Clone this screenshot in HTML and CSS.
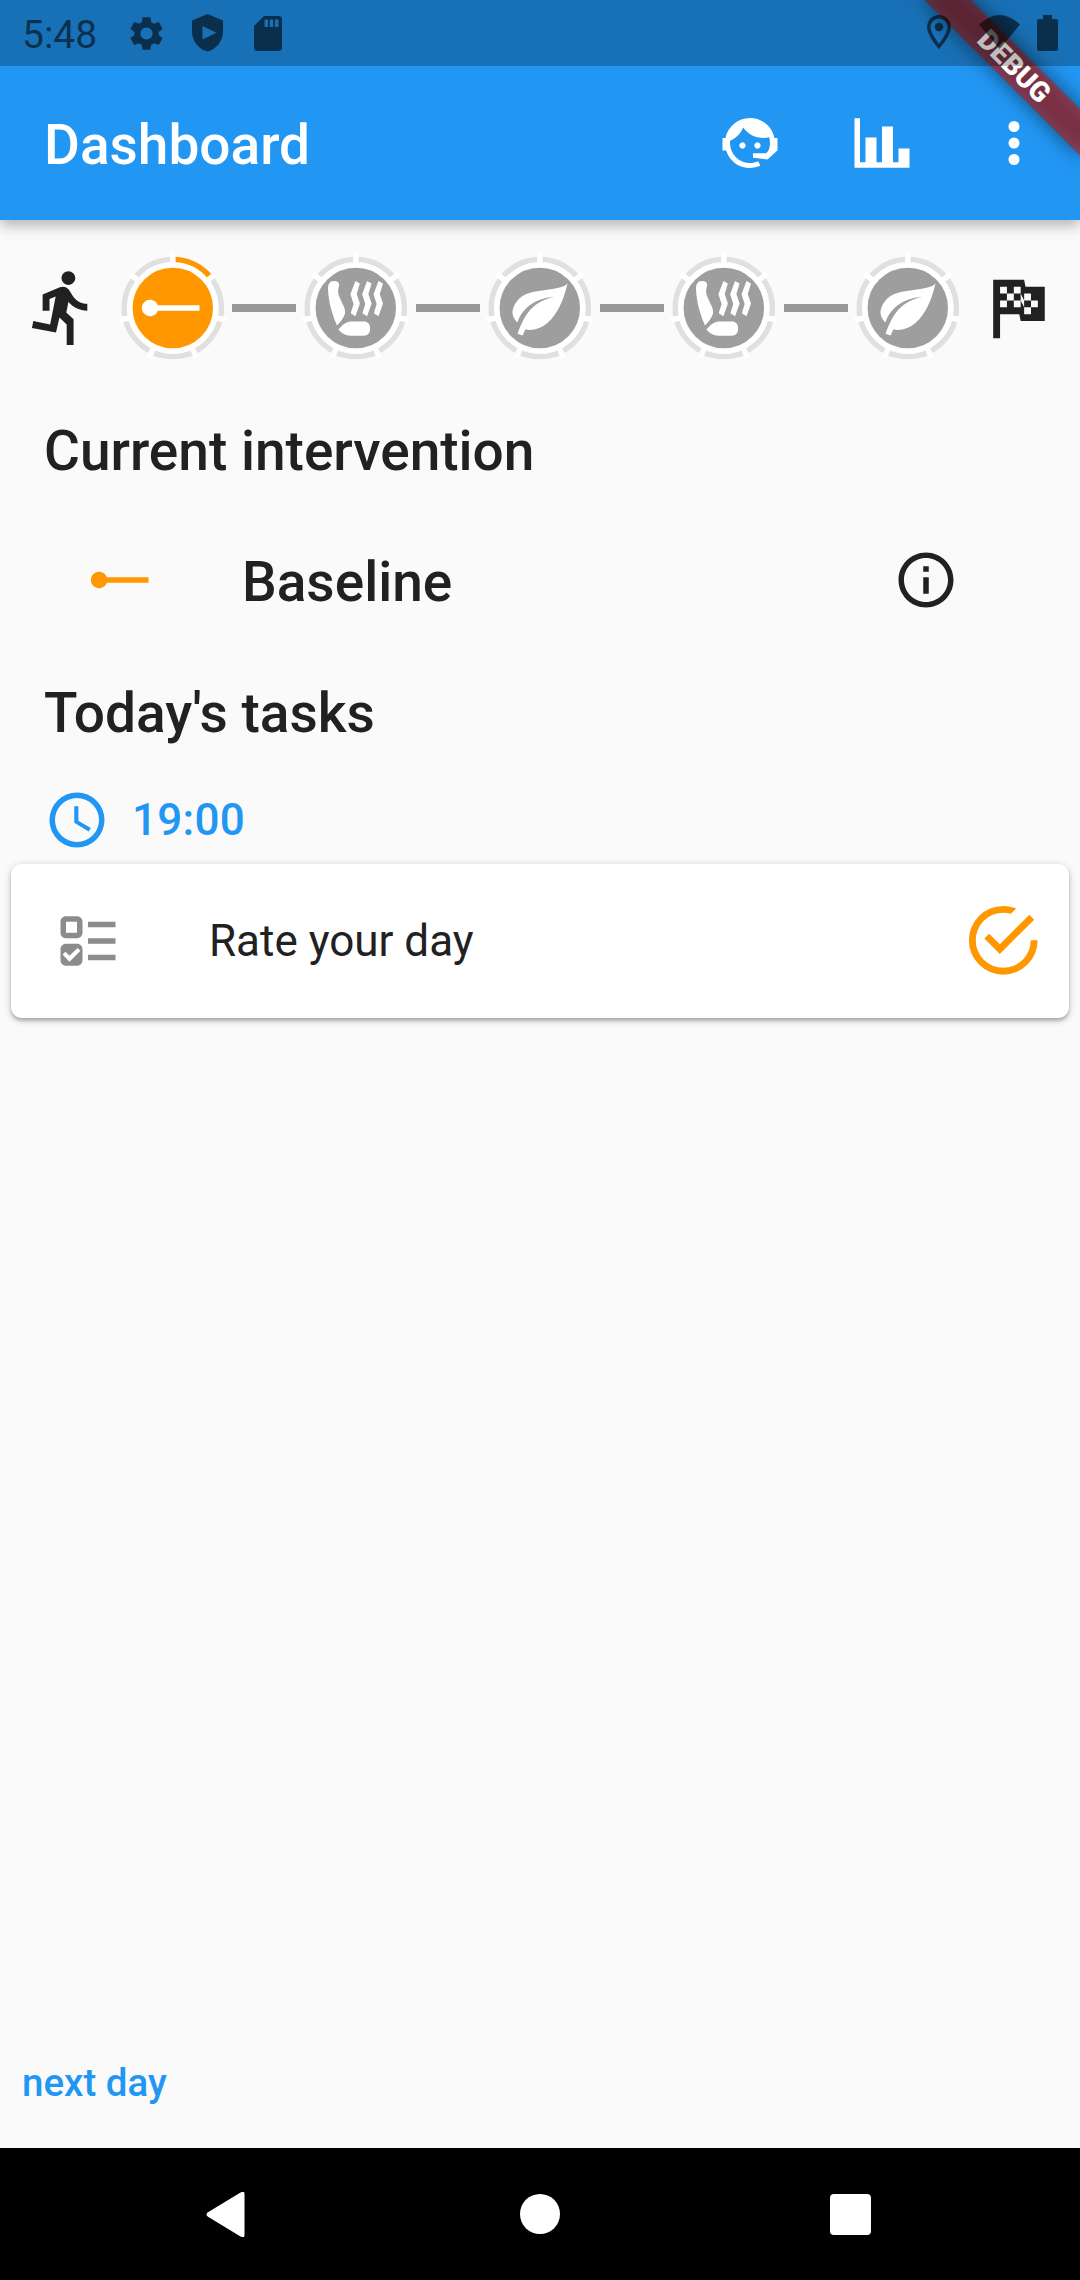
FILE: index.html
```html
<!DOCTYPE html>
<html lang="en">
<head>
<meta charset="utf-8">
<title>Dashboard</title>
<link rel="stylesheet" href="styles.css">
</head>
<body>
<svg class="defs" width="0" height="0">
  <defs>
    <symbol id="ray" viewBox="0 0 24 24"><path d="M4,9C5.31,9 6.42,9.83 6.83,11H22V13H6.83C6.42,14.17 5.31,15 4,15A3,3 0 0,1 1,12A3,3 0 0,1 4,9Z"/></symbol>
    <symbol id="leaf" viewBox="0 0 24 24"><path d="M17,8C8,10 5.9,16.17 3.82,21.34L5.71,22L6.66,19.7C7.14,19.87 7.64,20 8,20C19,20 22,3 22,3C21,5 14,5.25 9,6.25C4,7.25 2,11.5 2,13.5C2,15.5 3.75,17.25 3.75,17.25C7,8 17,8 17,8Z"/></symbol>
    <symbol id="heat" viewBox="0 0 66 66"><path d="M11 6C6.500 6 5 9 5 14C5.500 27 9 39 14 50.500C17.500 47 21 42.500 22 38.500C22.500 33 20 30 18 25.500C15.500 20 14.500 17 15.500 13C17 8.500 15.500 6 11 6ZM28 46.500H41C44.500 46.500 47 49 47 52.500V54.500C47 58 44.500 60.700 41 60.700H27.500C22.500 60.700 19 58.500 15.500 54.500C19 50 23 47 28 46.500ZM32.400 6L36.900 8.500L33.700 19L36.900 28.500L32.400 41.300L27.700 38.300L30.600 29L27.400 19.300ZM44.100 6L48.600 8.500L45.400 19L48.600 28.500L44.100 41.300L39.400 38.300L42.300 29L39.100 19.300ZM55.500 6L60 8.500L56.800 19L60 28.500L55.500 41.300L50.800 38.300L53.700 29L50.500 19.300Z"/></symbol>
    <symbol id="ring" viewBox="-60 -60 120 120">
      <circle r="48.700" fill="none" stroke="#e0e0e0" stroke-width="5.500"/>
      <path class="ring-progress" d="M0-48.700A48.700 48.700 0 0 1 38.080-30.360" fill="none" stroke-width="5.500"/>
      <g stroke="#fff" stroke-width="5.500">
        <path d="M0-45V-55"/><path d="M0-45V-55" transform="rotate(51.430)"/><path d="M0-45V-55" transform="rotate(102.860)"/><path d="M0-45V-55" transform="rotate(154.290)"/><path d="M0-45V-55" transform="rotate(205.710)"/><path d="M0-45V-55" transform="rotate(257.140)"/><path d="M0-45V-55" transform="rotate(308.570)"/>
      </g>
      <circle r="43.100" fill="currentColor" stroke="#fff" stroke-width="5.500"/>
    </symbol>
  </defs>
</svg>
<div class="screen">
  <header class="top">
    <div class="status-space"></div>
    <div class="app-bar">
      <h1 class="title">Dashboard</h1>
      <div class="action"><svg class="icon" viewBox="0 0 24 24"><path d="M18.720,14.760C19.070,13.910 19.260,13 19.260,12C19.260,11.280 19.150,10.590 18.960,9.950C18.310,10.100 17.630,10.180 16.920,10.180C13.860,10.180 11.150,8.670 9.500,6.340C8.610,8.500 6.910,10.260 4.770,11.220C4.730,11.470 4.730,11.740 4.730,12A7.270,7.270 0 0,0 12,19.270C13.050,19.270 14.060,19.040 14.970,18.630C15.540,19.720 15.800,20.260 15.780,20.260C14.140,20.810 12.870,21.080 12,21.080C9.580,21.080 7.270,20.130 5.570,18.420C4.530,17.380 3.760,16.110 3.330,14.730H2V10.180H3.090C3.930,6.040 7.600,2.920 12,2.920C14.400,2.920 16.710,3.870 18.420,5.580C19.690,6.840 20.540,8.450 20.890,10.180H22V14.730H21.940L18.380,18L13.080,17.400V15.730H17.910L18.720,14.760M9.270,11.770A1.140,1.140 0 1,1 9.260,11.770M14.720,11.770A1.140,1.140 0 1,1 14.710,11.770Z"/></svg></div>
      <div class="action"><svg class="icon" viewBox="0 0 24 24"><path d="M22,21H2V3H4V19H6V10H10V19H12V6H16V19H18V14H22V21Z"/></svg></div>
      <div class="action"><svg class="icon" viewBox="0 0 24 24"><circle cx="12" cy="6" r="2"/><circle cx="12" cy="12" r="2"/><circle cx="12" cy="18" r="2"/></svg></div>
    </div>
  </header>

  <div class="banner-clip">
    <div class="band band-shadow"></div>
    <div class="band banner">DEBUG</div>
  </div>

  <div class="status-bar">
    <span class="time">5:48</span>
    <svg class="st-gear" viewBox="2.300 2 19.400 20"><path d="M19.140 12.940c.04-.3.06-.61.06-.94 0-.32-.02-.64-.07-.94l2.030-1.580c.18-.14.23-.41.12-.61l-1.920-3.320c-.12-.22-.37-.29-.59-.22l-2.390.96c-.5-.38-1.030-.7-1.620-.94l-.36-2.540c-.04-.24-.24-.41-.48-.41h-3.840c-.24 0-.43.17-.47.41l-.36 2.540c-.59.24-1.130.57-1.620.94l-2.390-.96c-.22-.08-.47 0-.59.22L2.740 8.870c-.12.21-.08.47.12.61l2.030 1.580c-.05.3-.09.63-.09.94s.02.64.07.94l-2.030 1.580c-.18.14-.23.41-.12.61l1.920 3.320c.12.22.37.29.59.22l2.390-.96c.5.38 1.030.7 1.620.94l.36 2.540c.05.24.24.41.48.41h3.840c.24 0 .44-.17.47-.41l.36-2.540c.59-.24 1.130-.56 1.620-.94l2.390.96c.22.08.47 0 .59-.22l1.920-3.320c.12-.22.07-.47-.12-.61zM12 15.600a3.600 3.600 0 1 1 0-7.200 3.600 3.600 0 0 1 0 7.200z"/></svg>
    <svg class="st-shield" viewBox="0 0 31 38"><path fill-rule="evenodd" d="M15.500 0L31 6.500V18C31 27 24 35.500 15.500 37.500C7 35.500 0 27 0 18V6.500ZM10.500 12V25.500L24.500 18.700Z"/></svg>
    <svg class="st-sd" viewBox="0 0 28 35"><path fill-rule="evenodd" d="M10 0H24.500Q28 0 28 3.500V31.500Q28 35 24.500 35H3.500Q0 35 0 31.500V10ZM10.500 3.500V11H14V3.500ZM15.700 3.500V11H19.200V3.500ZM21 3.500V11H24.500V3.500Z"/></svg>
    <span class="grow"></span>
    <svg class="st-pin" viewBox="5 2 14 20"><path d="M12 2C8.130 2 5 5.130 5 9c0 5.250 7 13 7 13s7-7.750 7-13c0-3.870-3.130-7-7-7zM7 9c0-2.760 2.240-5 5-5s5 2.240 5 5c0 2.880-2.880 7.190-5 9.880C9.920 16.210 7 11.850 7 9z"/><circle cx="12" cy="9" r="2.500"/></svg>
    <svg class="st-wifi" viewBox="0 0 41 34"><path d="M0 9.500Q20.500-9.500 41 9.500L20.500 34Z"/></svg>
    <svg class="st-battery" viewBox="0 0 21 36"><path d="M6 0H15V4H19Q21 4 21 6V34Q21 36 19 36H2Q0 36 0 34V6Q0 4 2 4H6Z"/></svg>
  </div>

  <main class="content">
    <div class="timeline">
      <svg class="edge-icon" viewBox="0 0 24 24"><path d="M13.500,5.500C14.590,5.500 15.500,4.580 15.500,3.500C15.500,2.380 14.590,1.500 13.500,1.500C12.390,1.500 11.500,2.380 11.500,3.500C11.500,4.580 12.390,5.500 13.500,5.500M9.890,19.380L10.890,15L13,17V23H15V15.500L12.890,13.500L13.500,10.500C14.790,12 16.790,13 19,13V11C17.090,11 15.500,10 14.690,8.580L13.690,7C13.290,6.380 12.690,6 12,6C11.690,6 11.500,6.080 11.190,6.080L6,8.280V13H8V9.580L9.790,8.880L8.190,17L3.290,16L2.890,18L9.890,19.380Z"/></svg>
      <div class="phases">
        <div class="phase current"><svg class="ring"><use href="#ring"/></svg><svg class="glyph"><use href="#ray"/></svg></div>
        <div class="link"></div>
        <div class="phase"><svg class="ring"><use href="#ring"/></svg><svg class="glyph"><use href="#heat"/></svg></div>
        <div class="link"></div>
        <div class="phase"><svg class="ring"><use href="#ring"/></svg><svg class="glyph"><use href="#leaf"/></svg></div>
        <div class="link"></div>
        <div class="phase"><svg class="ring"><use href="#ring"/></svg><svg class="glyph"><use href="#heat"/></svg></div>
        <div class="link"></div>
        <div class="phase"><svg class="ring"><use href="#ring"/></svg><svg class="glyph"><use href="#leaf"/></svg></div>
      </div>
      <svg class="edge-icon" viewBox="0 0 24 24"><path d="M14.400,6H20V16H13L12.600,14H7V21H5V4H14L14.400,6M14,14H16V12H18V10H16V8H14V10L13,8V6H11V8H9V6H7V8H9V10H7V12H9V10H11V12H13V10L14,12V14M11,10V8H13V10H11M14,10H16V12H14V10Z"/></svg>
    </div>

    <h2 class="heading">Current intervention</h2>
    <div class="intervention">
      <svg class="icon orange"><use href="#ray"/></svg>
      <span class="name">Baseline</span>
      <svg class="icon" viewBox="0 0 24 24"><path d="M11 7h2v2h-2zm0 4h2v6h-2zm1-9C6.480 2 2 6.480 2 12s4.480 10 10 10 10-4.480 10-10S17.520 2 12 2zm0 18c-4.410 0-8-3.590-8-8s3.590-8 8-8 8 3.590 8 8-3.590 8-8 8z"/></svg>
    </div>
    <h2 class="heading">Today's tasks</h2>
    <div class="slot">
      <svg class="icon" viewBox="0 0 24 24"><path d="M12,20A8,8 0 0,0 20,12A8,8 0 0,0 12,4A8,8 0 0,0 4,12A8,8 0 0,0 12,20M12,2A10,10 0 0,1 22,12A10,10 0 0,1 12,22C6.470,22 2,17.500 2,12A10,10 0 0,1 12,2M12.500,7V12.250L17,14.920L16.250,16.150L11,13V7H12.500Z"/></svg>
      <span>19:00</span>
    </div>
    <div class="card">
      <svg class="icon muted" viewBox="0 0 24 24"><path d="M4 13C2.890 13 2 13.890 2 15V19C2 20.110 2.890 21 4 21H8C9.110 21 10 20.110 10 19V15C10 13.890 9.110 13 8 13H4M8.200 14.500L9.260 15.550L5.270 19.500L2.740 16.950L3.810 15.900L5.280 17.390L8.200 14.500M4 3C2.890 3 2 3.890 2 5V9C2 10.110 2.890 11 4 11H8C9.110 11 10 10.110 10 9V5C10 3.890 9.110 3 8 3H4M4 5H8V9H4V5M12 5H22V7H12V5M12 19V17H22V19H12M12 11H22V13H12V11Z"/></svg>
      <span class="task">Rate your day</span>
      <svg class="done" viewBox="0 0 24 24"><path d="M20,12A8,8 0 0,1 12,20A8,8 0 0,1 4,12A8,8 0 0,1 12,4C12.760,4 13.500,4.110 14.200,4.310L15.770,2.740C14.610,2.260 13.340,2 12,2A10,10 0 0,0 2,12A10,10 0 0,0 12,22A10,10 0 0,0 22,12M7.910,10.080L6.500,11.500L11,16L21,6L19.590,4.580L11,13.170L7.910,10.080Z"/></svg>
    </div>
    <span class="grow"></span>
    <div class="next">next day</div>
  </main>

  <nav class="nav">
    <svg class="nav-back" viewBox="0 0 39 45"><path d="M34.500.600Q36.500-.400 38-.1Q38.500.500 38.500 3V42Q38.500 44.500 38 45Q36.500 45.400 34.500 44.400L2 24.800Q-1 22.500 2 20.200Z"/></svg>
    <div class="nav-home"></div>
    <div class="nav-recent"></div>
  </nav>
</div>
</body>
</html>
```
FILE: styles.css
```css
* { box-sizing: border-box; }
body { margin: 0; font-family: Roboto, sans-serif; color: #212121; background: #fafafa; }
svg { display: block; flex: none; fill: currentColor; }
.defs { position: absolute; }
.screen { position: relative; display: flex; flex-direction: column; width: 1080px; height: 2280px; overflow: hidden; }
.grow { flex: 1; }
.icon { width: 66px; height: 66px; }

.top { flex: none; background: #2196f3; color: #fff; box-shadow: 0 5px 11px rgba(0,0,0,.16), 0 11px 14px rgba(0,0,0,.06), 0 3px 14px rgba(0,0,0,.08); }
.status-space { height: 66px; }
.app-bar { display: flex; align-items: center; height: 154px; padding-left: 44px; }
.title { flex: 1; margin: 0; padding-top: 3px; font-size: 55px; font-weight: 500; line-height: 64px; }
.action { display: flex; align-items: center; justify-content: center; width: 132px; height: 132px; }

/* Corner ribbon lies over the app bar and under the status bar scrim */
.banner-clip { position: absolute; top: 0; right: 0; width: 400px; height: 400px; overflow: hidden; }
.band { position: absolute; left: 290px; top: 77px; width: 220px; height: 33px; transform: rotate(45deg); transform-origin: 110px -77px; }
.band-shadow { background: rgba(0,0,0,.5); filter: blur(10px); }
.banner { padding-left: 1px; background: rgba(183,28,28,.627); color: #fff; font-size: 28px; font-weight: 900; line-height: 33px; text-align: center; }

.status-bar { position: absolute; top: 0; left: 0; width: 1080px; height: 66px; display: flex; align-items: flex-start; padding: 0 22px 0 22px; background: rgba(0,0,0,.25); color: rgba(0,0,0,.58); }
.time { width: 108px; margin-top: 12px; font-size: 39px; line-height: 46px; }
.st-gear { width: 33px; height: 35px; margin-top: 16px; }
.st-shield { width: 31px; height: 38px; margin: 14px 0 0 29px; }
.st-sd { width: 28px; height: 35px; margin: 16px 0 0 31px; }
.st-pin { width: 24px; height: 34px; margin-top: 15px; }
.st-wifi { width: 41px; height: 34px; margin: 15px 0 0 28px; }
.st-battery { width: 21px; height: 36px; margin: 15px 0 0 17px; }

.content { flex: 1; display: flex; flex-direction: column; }
.timeline { display: flex; align-items: center; justify-content: space-between; height: 176px; padding: 0 22px; }
.edge-icon { width: 82.500px; height: 82.500px; margin-bottom: 2px; }
.phases { display: flex; align-items: center; }
.phase { display: grid; place-items: center; width: 119.600px; height: 120px; color: #9e9e9e; }
.phase > svg { grid-area: 1 / 1; }
.ring { width: 119.600px; height: 120px; --progress: none; }
.current { color: #ff9800; }
.current .ring { --progress: #ff9800; }
.ring-progress { stroke: var(--progress); }
.glyph { width: 66px; height: 66px; color: #fff; }
.link { width: 64.200px; height: 8.250px; background: #999; }

.heading { margin: 0; padding: 0 44px; font-size: 55px; font-weight: 500; line-height: 64px; }
.timeline + .heading { margin-top: 23px; }
.intervention { display: flex; align-items: center; height: 198px; padding: 0 121px 4px 88px; }
.name { flex: 1; margin-left: 88px; font-size: 55px; font-weight: 500; line-height: 64px; padding-top: 3px; }
.orange { color: #ff9800; }
.slot { display: flex; align-items: center; gap: 22px; height: 66px; margin: 42px 0 0 44px; color: #2196f3; font-size: 44px; font-weight: 500; line-height: 52px; letter-spacing: .3px; }
.card { display: flex; align-items: center; height: 153.500px; margin: 11px 11px 0; padding: 0 25px 0 44px; border-radius: 11px; background: #fff; box-shadow: 0 3px 3px rgba(0,0,0,.16), 0 1px 8px rgba(0,0,0,.1), 0 3px 7px rgba(0,0,0,.14); }
.muted { color: #8c8c8c; }
.task { flex: 1; margin-left: 88px; padding-top: 1px; font-size: 44px; line-height: 52px; }
.done { width: 82.500px; height: 82.500px; margin-bottom: 1.500px; color: #ff9800; }
.next { margin-bottom: 43px; padding-left: 22px; color: #2196f3; font-size: 38.500px; font-weight: 500; line-height: 45px; }

.nav { flex: none; display: flex; align-items: center; height: 132px; padding-left: 206px; background: #000; color: #fff; }
.nav-back { width: 39px; height: 45px; }
.nav-home { width: 40px; height: 40px; margin-left: 275px; border-radius: 50%; background: #fff; }
.nav-recent { width: 41px; height: 41px; margin-left: 270px; border-radius: 4px; background: #fff; }
```
